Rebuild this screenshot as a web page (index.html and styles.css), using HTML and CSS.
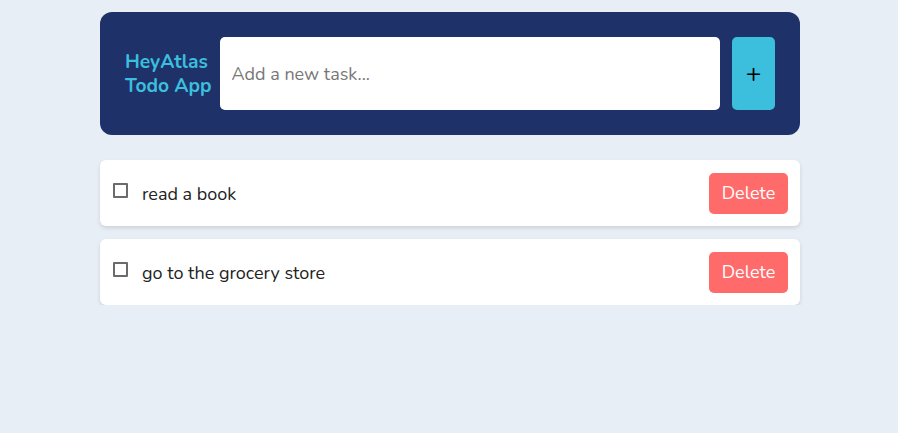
FILE: index.html
```html
<!DOCTYPE html>
<html lang="en">
<head>
<meta charset="utf-8">
<title>HeyAtlas Todo App</title>
<link rel="stylesheet" href="styles.css">
</head>
<body>
<main class="app">
  <header class="header">
    <h1 class="title">HeyAtlas<br>Todo App</h1>
    <input class="task-input" type="text" placeholder="Add a new task...">
    <button class="add-btn" type="button">+</button>
  </header>
  <ul class="list">
    <li class="item">
      <input class="check" type="checkbox">
      <span class="text">read a book</span>
      <button class="delete" type="button">Delete</button>
    </li>
    <li class="item">
      <input class="check" type="checkbox">
      <span class="text">go to the grocery store</span>
      <button class="delete" type="button">Delete</button>
    </li>
  </ul>
</main>
</body>
</html>
```
FILE: styles.css
```css
* { box-sizing: border-box; }
html, body { margin: 0; padding: 0; }
body {
  background: #e8eef6;
  font-family: "Nunito", "Lato", "Open Sans", sans-serif;
  color: #222;
  padding-left: 2px;
}
.app {
  width: 700px;
  margin: 12px auto 0;
}
.header {
  display: flex;
  align-items: center;
  background: #1f3169;
  border-radius: 12px;
  padding: 25px;
}
.title {
  margin: 0 8px 0 0;
  font-size: 19.2px;
  line-height: 24px;
  font-weight: 700;
  color: #3bbfdc;
  white-space: nowrap;
}
.task-input {
  flex: 1;
  min-width: 0;
  height: 73px;
  border: none;
  border-radius: 5px;
  padding: 0 12px;
  font-family: inherit;
  font-size: 18px;
  color: #333;
  outline: none;
}
.task-input::placeholder { color: #777; }
.add-btn {
  margin-left: 12px;
  width: 43px;
  height: 73px;
  border: none;
  border-radius: 5px;
  background: #3bbfdc;
  color: #000;
  font-size: 26px;
  font-family: inherit;
  padding: 0;
}
.list {
  list-style: none;
  margin: 25px 0 0;
  padding: 0;
  display: flex;
  flex-direction: column;
  gap: 13px;
}
.item {
  display: flex;
  align-items: center;
  background: #fff;
  border-radius: 6px;
  padding: 13px 12px 12px 13px;
  box-shadow: 0 2px 4px rgba(0,0,0,0.12);
}
.check {
  appearance: none;
  -webkit-appearance: none;
  margin: 0;
  width: 15px;
  height: 15px;
  flex: none;
  border: 2px solid #6b6b6b;
  border-radius: 1px;
  background: #fff;
  position: relative;
  top: -3px;
}
.text {
  flex: 1;
  margin-left: 14px;
  font-size: 18px;
  color: #222;
}
.delete {
  border: none;
  border-radius: 5px;
  background: #ff6b6b;
  color: #fff;
  font-family: inherit;
  font-size: 18px;
  line-height: 25px;
  height: 41px;
  padding: 0 12px;
  width: 79px;
}
```
